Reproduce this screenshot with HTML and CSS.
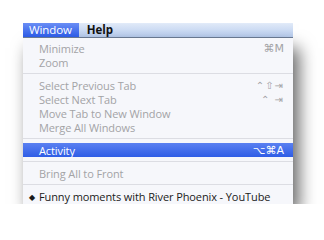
FILE: index.html
```html
<!DOCTYPE html>
<html lang="en">
<head>
  <meta charset="UTF-8" />
  <title>Window Menu</title>
  <link rel="stylesheet" href="styles.css">
</head>
<body>

  <div class="screen">
    <!-- menu bar -->
    <div class="menubar">
      <span class="title active">Window</span>
      <span class="title">Help</span>
    </div>

    <!-- dropdown -->
    <div class="menu">
      <div class="row off"><span>Minimize</span><span class="key">⌘M</span></div>
      <div class="row off"><span>Zoom</span></div>
      <div class="sep"></div>
      <div class="row off"><span>Select Previous Tab</span><span class="key small">⌃⇧⇥</span></div>
      <div class="row off"><span>Select Next Tab</span><span class="key small">⌃ ⇥</span></div>
      <div class="row off"><span>Move Tab to New Window</span></div>
      <div class="row off"><span>Merge All Windows</span></div>
      <div class="sep"></div>
      <div class="row hi"><span>Activity</span><span class="key">⌥⌘A</span></div>
      <div class="sep"></div>
      <div class="row off"><span>Bring All to Front</span></div>
      <div class="sep"></div>
      <div class="row on"><span class="mark">◆</span><span>Funny moments with River Phoenix - YouTube</span></div>
    </div>
  </div>

</body>
</html>
```

FILE: styles.css
```css
* {
  box-sizing: border-box;
}

body {
  margin: 0;
  background: #fff;
  font-family: 'Open Sans', 'Lucida Grande', sans-serif;
  font-size: 11px;
  letter-spacing: -0.1px;
}

.screen {
  padding: 23px 31px 0 23px;
}

.menubar {
  display: flex;
  height: 15px;
  background: linear-gradient(#e2ebf9, #b8cdef);
  border-bottom: 1px solid #6f7f99;
}

.title {
  padding: 0 7px 0 8px;
  line-height: 14px;
  font-size: 11.5px;
  color: #111;
  font-weight: bold;
}

.title.active {
  padding: 0 7px 0 6px;
  color: #fff;
  font-weight: normal;
  background: linear-gradient(#6a8ef5, #2c5be6);
}

.menu {
  background: #f6f7fb;
  padding: 3px 0 1px;
  box-shadow: 6px 10px 16px rgba(0, 0, 0, 0.6);
}

.row {
  display: flex;
  justify-content: space-between;
  align-items: center;
  height: 14px;
  padding: 0 9px 0 16px;
  white-space: nowrap;
}

.row.off {
  color: #a3a3a6;
}

.row.on {
  justify-content: flex-start;
  padding-left: 6px;
  color: #1a1a1a;
}

.row.hi {
  color: #fff;
  background: linear-gradient(#5a80f1, #2f5de6);
}

.mark {
  width: 10px;
  font-size: 8px;
}

.key {
  font-family: 'DejaVu Sans', sans-serif;
  font-size: 11px;
  letter-spacing: 0;
}

.key.small {
  font-size: 10px;
  letter-spacing: 1px;
}

.sep {
  height: 9px;
  display: flex;
  align-items: center;
}

.sep::before {
  content: "";
  flex: 1;
  height: 1px;
  background: #dcdde3;
}
```
